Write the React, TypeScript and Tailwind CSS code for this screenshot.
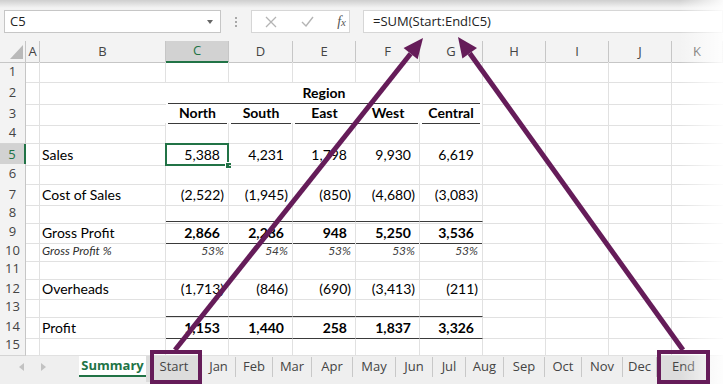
import React from 'react';

type Kind = 'num' | 'bold' | 'pct';

interface SheetRow {
  n: number;
  h: string;
  label?: string;
  italicLabel?: boolean;
  values?: string[];
  kind?: Kind;
  rules?: boolean;
}

const GRID =
  'grid grid-cols-[26px_14px_126px_63px_64px_63px_64px_63px_63px_63px_63px_1fr]';
const CELL = 'border-r border-b border-[#e1e1e1]';

const rows: SheetRow[] = [
  { n: 1, h: 'h-[20px]' },
  { n: 2, h: 'h-[20px]' },
  { n: 3, h: 'h-[21px]' },
  { n: 4, h: 'h-[21px]' },
  { n: 5, h: 'h-[20px]', label: 'Sales', values: ['5,388', '4,231', '1,798', '9,930', '6,619'], kind: 'num' },
  { n: 6, h: 'h-[20px]' },
  { n: 7, h: 'h-[19px]', label: 'Cost of Sales', values: ['(2,522)', '(1,945)', '(850)', '(4,680)', '(3,083)'], kind: 'num' },
  { n: 8, h: 'h-[18px]' },
  { n: 9, h: 'h-[20px]', label: 'Gross Profit', values: ['2,866', '2,286', '948', '5,250', '3,536'], kind: 'bold', rules: true },
  { n: 10, h: 'h-[18px]', label: 'Gross Profit %', italicLabel: true, values: ['53%', '54%', '53%', '53%', '53%'], kind: 'pct' },
  { n: 11, h: 'h-[19px]' },
  { n: 12, h: 'h-[19px]', label: 'Overheads', values: ['(1,713)', '(846)', '(690)', '(3,413)', '(211)'], kind: 'num' },
  { n: 13, h: 'h-[19px]' },
  { n: 14, h: 'h-[19px]', label: 'Profit', values: ['1,153', '1,440', '258', '1,837', '3,326'], kind: 'bold', rules: true },
  { n: 15, h: 'h-[20px]' },
];

const regions = ['North', 'South', 'East', 'West', 'Central'];
const letters = ['B', 'C', 'D', 'E', 'F', 'G', 'H', 'I', 'J', 'K'];

const tabs = [
  { name: 'Jan', w: 'w-[34px]' },
  { name: 'Feb', w: 'w-[37px]' },
  { name: 'Mar', w: 'w-[39px]' },
  { name: 'Apr', w: 'w-[41px]' },
  { name: 'May', w: 'w-[43px]' },
  { name: 'Jun', w: 'w-[37px]' },
  { name: 'Jul', w: 'w-[33px]' },
  { name: 'Aug', w: 'w-[38px]' },
  { name: 'Sep', w: 'w-[41px]' },
  { name: 'Oct', w: 'w-[37px]' },
  { name: 'Nov', w: 'w-[41px]' },
  { name: 'Dec', w: 'w-[34px]' },
];

function RowHeader({ n }: { n: number }) {
  const selected = n === 5;
  return (
    <div
      className={`flex items-center justify-center border-b border-[#d4d4d4] font-['Open_Sans',sans-serif] text-[13px] ${
        selected
          ? 'bg-[#d2d2d2] text-[#217346] border-r-2 border-r-[#217346]'
          : 'bg-[#f3f3f3] text-[#444] border-r border-r-[#c6c6c6]'
      }`}
    >
      {n}
    </div>
  );
}

function ValueCell({ v, kind, rules, selected }: { v: string; kind: Kind; rules?: boolean; selected?: boolean }) {
  const neg = v.startsWith('(');
  const pad = kind === 'pct' || neg ? 'pr-[4px]' : 'pr-[8px]';
  const text =
    kind === 'bold'
      ? 'font-bold text-[14px] text-black'
      : kind === 'pct'
        ? 'italic text-[12px] text-[#404040]'
        : 'text-[14px] text-black';
  const border = rules
    ? 'border-r border-r-[#e1e1e1] border-t border-t-[#3a3a3a] border-b border-b-[#3a3a3a]'
    : CELL;
  return (
    <div className={`relative flex items-center justify-end ${pad} ${border} ${text}`}>
      {v}
      {selected && (
        <>
          <div className="absolute -left-px -top-px -right-px -bottom-px border-2 border-[#217346]" />
          <div className="absolute -right-[4px] -bottom-[4px] w-[7px] h-[7px] bg-[#217346] border border-white" />
        </>
      )}
    </div>
  );
}

function SheetRowView({ row }: { row: SheetRow }) {
  if (row.n === 2) {
    return (
      <div className={`${GRID} ${row.h}`}>
        <RowHeader n={2} />
        <div className={CELL} />
        <div className="border-b border-[#e1e1e1]" />
        <div className="col-span-5 pb-[1px] border-r border-[#e1e1e1]">
          <div className="mx-[2px] h-full border-b border-[#3a3a3a] flex items-center justify-center font-bold text-[14px] text-black">
            Region
          </div>
        </div>
        <div className={CELL} />
        <div className={CELL} />
        <div className={CELL} />
        <div className="border-b border-[#e1e1e1]" />
      </div>
    );
  }
  if (row.n === 3) {
    return (
      <div className={`${GRID} ${row.h}`}>
        <RowHeader n={3} />
        <div className={CELL} />
        <div className="border-b border-[#e1e1e1]" />
        {regions.map((r, i) => (
          <div key={r} className={`pb-[2px] ${i === 4 ? 'border-r border-[#e1e1e1]' : ''}`}>
            <div className="mx-[2px] h-full border-b border-[#3a3a3a] flex items-center justify-center font-bold text-[14px] text-black">
              {r}
            </div>
          </div>
        ))}
        <div className={CELL} />
        <div className={CELL} />
        <div className={CELL} />
        <div className="border-b border-[#e1e1e1]" />
      </div>
    );
  }
  return (
    <div className={`${GRID} ${row.h}`}>
      <RowHeader n={row.n} />
      <div className={CELL} />
      <div
        className={`${CELL} flex items-center pl-[2px] ${
          row.italicLabel ? 'italic text-[12px] text-[#303030]' : 'text-[14px] text-black'
        }`}
      >
        {row.label}
      </div>
      {row.values
        ? row.values.map((v, i) => (
            <ValueCell key={i} v={v} kind={row.kind!} rules={row.rules} selected={row.n === 5 && i === 0} />
          ))
        : [0, 1, 2, 3, 4].map((i) => <div key={i} className={CELL} />)}
      <div className={CELL} />
      <div className={CELL} />
      <div className={CELL} />
      <div className="border-b border-[#e1e1e1]" />
    </div>
  );
}

function Toolbar() {
  return (
    <div className="h-[41px] bg-[#f3f3f3] pt-[10px] flex items-start font-['Open_Sans',sans-serif]">
      <div className="ml-[4px] w-[217px] h-[23px] bg-white border border-[#c6c6c6] flex items-center justify-between pl-[5px] pr-[7px] text-[13px] text-[#222]">
        <span>C5</span>
        <svg width="6" height="4" viewBox="0 0 6 4">
          <path d="M0 0 L6 0 L3 4 Z" fill="#666" />
        </svg>
      </div>
      <div className="w-[30px] h-[23px] flex flex-col items-center justify-center gap-[2px]">
        <span className="w-[2px] h-[2px] bg-[#a8a8a8]" />
        <span className="w-[2px] h-[2px] bg-[#a8a8a8]" />
        <span className="w-[2px] h-[2px] bg-[#a8a8a8]" />
      </div>
      <div className="w-[99px] h-[23px] bg-white border border-[#d6d6d6] flex items-center">
        <span className="w-[38px] flex justify-center">
          <svg width="12" height="12" viewBox="0 0 12 12">
            <path d="M1 1 L11 11 M11 1 L1 11" stroke="#b4b4b4" strokeWidth="1.3" fill="none" />
          </svg>
        </span>
        <span className="w-[34px] flex justify-center">
          <svg width="13" height="11" viewBox="0 0 13 11">
            <path d="M1 6 L5 10 L12 1" stroke="#b4b4b4" strokeWidth="1.4" fill="none" />
          </svg>
        </span>
        <span className="flex-1 text-right pr-[3px] font-['Liberation_Serif',serif] italic text-[14px] text-[#555]">
          f<span className="text-[11px]">x</span>
        </span>
      </div>
      <div className="ml-[13px] flex-1 h-[23px] bg-white border border-[#d6d6d6] flex items-center pl-[9px] text-[13px] text-[#222]">
        =SUM(Start:End!C5)
      </div>
    </div>
  );
}

function ColumnHeaders() {
  return (
    <div className={`${GRID} h-[21px] bg-[#f3f3f3] font-['Open_Sans',sans-serif] text-[13px] text-[#444]`}>
      <div className="relative border-r border-b border-[#c6c6c6]">
        <svg className="absolute left-0 top-0" width="26" height="21" viewBox="0 0 26 21">
          <path d="M23 4 L23 18 L10 18 Z" fill="#b9b9b9" />
        </svg>
      </div>
      <div className="flex items-center justify-center border-r border-b border-[#c6c6c6]">A</div>
      {letters.map((l) =>
        l === 'C' ? (
          <div
            key={l}
            className="flex items-center justify-center bg-[#d2d2d2] text-[#217346] border-r border-r-[#c6c6c6] border-b-2 border-b-[#217346]"
          >
            {l}
          </div>
        ) : (
          <div key={l} className="flex items-center justify-center border-r border-b border-[#c6c6c6]">
            {l}
          </div>
        )
      )}
    </div>
  );
}

function TabBar() {
  return (
    <div className="h-[29px] bg-[#efefef] border-t border-[#d4d4d4] flex items-start font-['Open_Sans',sans-serif] text-[13px] text-[#444]">
      <div className="w-[79px] h-[21px] flex items-center">
        <svg className="ml-[19px]" width="5" height="8" viewBox="0 0 5 8">
          <path d="M5 0 L5 8 L0 4 Z" fill="#c2c2c2" />
        </svg>
        <svg className="ml-[17px]" width="5" height="8" viewBox="0 0 5 8">
          <path d="M0 0 L0 8 L5 4 Z" fill="#c2c2c2" />
        </svg>
      </div>
      <div className="w-[67px] h-[21px] bg-white border-b-2 border-[#217346] flex items-center justify-center font-bold text-[#217346]">
        Summary
      </div>
      <div className="w-[56px] h-[26px] bg-[#dcdcdc] flex items-center justify-center pb-[4px]">Start</div>
      {tabs.map((t) => (
        <div key={t.name} className={`${t.w} h-[20px] mt-[1px] flex items-center justify-center border-r border-[#c8c8c8]`}>
          {t.name}
        </div>
      ))}
      <div className="w-[53px] h-[26px] bg-[#dcdcdc] flex items-center justify-center pb-[4px]">End</div>
    </div>
  );
}

export default function App() {
  const purple = '#651c59';
  return (
    <div className="relative w-[723px] h-[384px] overflow-hidden bg-white font-['Lato',sans-serif]">
      <Toolbar />
      <ColumnHeaders />
      {rows.map((r) => (
        <SheetRowView key={r.n} row={r} />
      ))}
      <TabBar />

      {/* shadows round the picture edges */}
      <div className="absolute left-0 top-0 w-full h-[8px] bg-linear-to-b from-black/15 to-black/0" />
      <div className="absolute right-0 top-0 w-[44px] h-full bg-linear-to-r from-white/0 to-white/90" />

      {/* callout arrows and boxes */}
      <svg className="absolute left-0 top-0 pointer-events-none" width="723" height="384" viewBox="0 0 723 384">
        <line x1="175" y1="350" x2="410.6" y2="53.7" stroke={purple} strokeWidth="5" />
        <polygon points="423,38 417.6,59.3 403.6,48.1" fill={purple} />
        <line x1="683" y1="350" x2="469.7" y2="53.2" stroke={purple} strokeWidth="5" />
        <polygon points="458,37 477,47.9 462.4,58.5" fill={purple} />
        <rect x="152" y="352" width="48" height="30" fill="none" stroke={purple} strokeWidth="4" />
        <rect x="659" y="352" width="49" height="30" fill="none" stroke={purple} strokeWidth="4" />
      </svg>
    </div>
  );
}
